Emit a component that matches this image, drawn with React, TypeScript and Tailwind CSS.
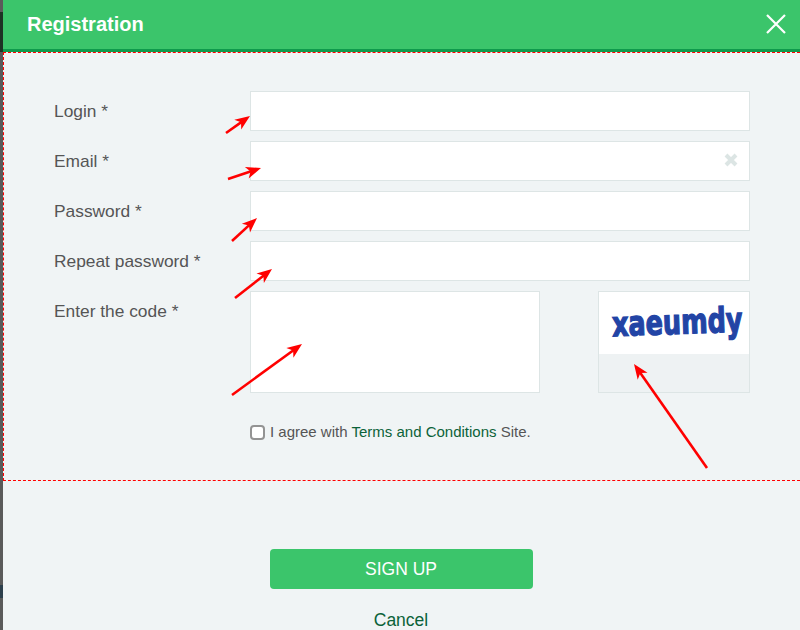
const fields = ["Login *", "Email *", "Password *", "Repeat password *"];

const arrows = [
  [226, 133, 250, 116],
  [228, 179, 261, 168],
  [232, 241, 257, 218],
  [235, 298, 272, 269],
  [232, 395, 302, 344],
  [707, 468, 634, 364],
];

function Arrow({ x1, y1, x2, y2 }: { x1: number; y1: number; x2: number; y2: number }) {
  const a = Math.atan2(y2 - y1, x2 - x1);
  const p = (d: number, s: number) =>
    `${x2 - d * Math.cos(a) - s * Math.sin(a)},${y2 - d * Math.sin(a) + s * Math.cos(a)}`;
  return (
    <g>
      <line x1={x1} y1={y1} x2={x2 - 8 * Math.cos(a)} y2={y2 - 8 * Math.sin(a)} stroke="#ff0000" strokeWidth="2.6" />
      <polygon points={`${x2},${y2} ${p(15, 6)} ${p(11, 0)} ${p(15, -6)}`} fill="#ff0000" />
    </g>
  );
}

export default function App() {
  return (
    <div className="relative flex h-[630px] w-[800px] overflow-hidden bg-[#f0f4f5] font-['Liberation_Sans',Arial,sans-serif]">
      {/* Sliver of the page behind the dialog */}
      <div className="flex w-[3px] shrink-0 flex-col bg-[#5a5a5a]">
        <div className="mt-[12px] h-[40px] bg-[#1d3325]" />
        <div className="mt-[533px] h-[13px] bg-[#2c3f4c]" />
      </div>

      <div className="flex min-w-0 flex-1 flex-col">
        {/* Header */}
        <div className="flex h-[52px] shrink-0 items-center justify-between border-b-[3px] border-[#0f9a4c] bg-[#3bc56b] pb-[2px] pl-[24px] pr-[13px]">
          <h1 className="text-[20px] font-bold text-white">Registration</h1>
          <svg width="22" height="22" viewBox="0 0 22 22" fill="none" stroke="#ffffff" strokeWidth="2.2">
            <path d="M2 2 L20 20 M20 2 L2 20" />
          </svg>
        </div>

        {/* Form */}
        <div className="h-[429px] shrink-0 border-b border-l border-t border-dashed border-[#ff0000] pl-[50px] pt-[38px]">
          <div className="flex flex-col gap-[10px]">
            {fields.map((f, i) => (
              <div key={f} className="flex h-[40px] items-center">
                <label className="w-[196px] shrink-0 pt-[1px] text-[17.35px] text-[#555555]">{f}</label>
                <div className="relative h-[40px] w-[500px] border border-[#dde5e5] bg-white">
                  {i === 1 && (
                    <svg className="absolute right-[11px] top-[11px]" width="14" height="14" viewBox="0 0 14 14" stroke="#dce5e4" strokeWidth="4" fill="none">
                      <path d="M2 2 L12 12 M12 2 L2 12" />
                    </svg>
                  )}
                </div>
              </div>
            ))}
            <div className="flex h-[102px] items-start">
              <label className="w-[196px] shrink-0 pt-[7px] text-[17.35px] text-[#555555]">Enter the code *</label>
              <div className="h-[102px] w-[290px] border border-[#dde5e5] bg-white" />
              <div className="ml-[58px] flex h-[102px] w-[152px] flex-col border border-[#dde5e5] bg-[#eef2f3]">
                <div className="flex h-[62px] items-center justify-end bg-white pb-[1px] pr-[6px]">
                  <span className="inline-block -rotate-[2deg] scale-y-[1.35] font-['DejaVu_Sans',sans-serif] text-[25.5px] font-bold leading-none text-[#2244a5] [-webkit-text-stroke:1px_#2244a5]">
                    xaeumdy
                  </span>
                </div>
              </div>
            </div>
          </div>

          <div className="ml-[196px] mt-[28px] flex items-center text-[15px] text-[#555555]">
            <span className="mr-[5px] h-[15px] w-[15px] rounded-[4px] border-2 border-[#939393] bg-white" />
            <span>
              I agree with <a className="text-[#0b6239]">Terms and Conditions</a> Site.
            </span>
          </div>
        </div>

        {/* Actions */}
        <div className="flex flex-col items-center pr-[1px] pt-[68px]">
          <button className="h-[40px] w-[263px] rounded-[4px] bg-[#3bc56b] text-[17.5px] text-white">SIGN UP</button>
          <a className="mt-[20px] text-[17.5px] leading-[22px] text-[#0b6239]">Cancel</a>
        </div>
      </div>

      {/* Red annotation arrows */}
      <svg className="pointer-events-none absolute left-0 top-0" width="800" height="630">
        {arrows.map(([x1, y1, x2, y2], i) => (
          <Arrow key={i} x1={x1} y1={y1} x2={x2} y2={y2} />
        ))}
      </svg>
    </div>
  );
}
